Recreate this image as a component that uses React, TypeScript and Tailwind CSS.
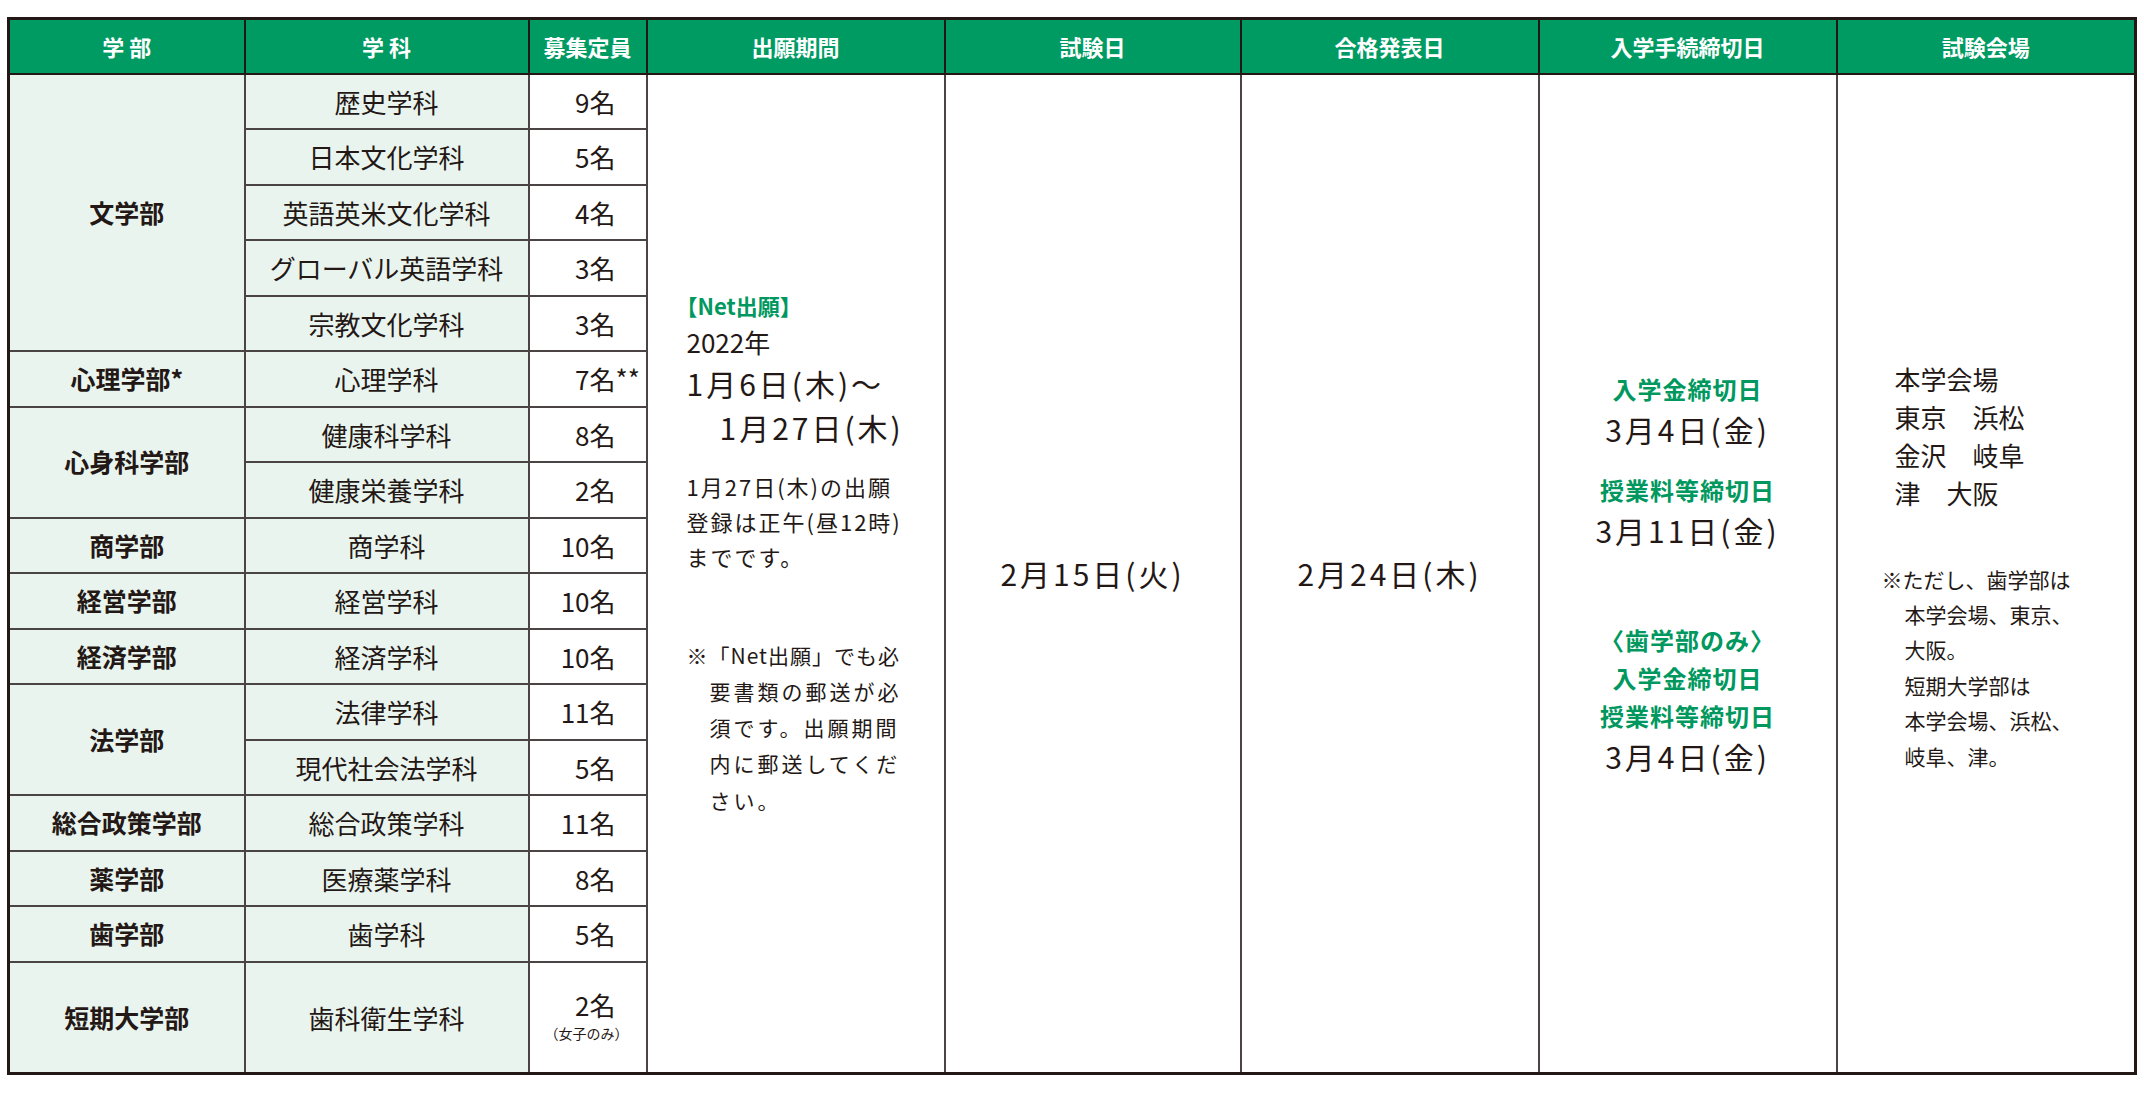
import React from "react";

type Row = {
  faculty?: string;
  span?: number;
  dept: string;
  cap: string;
  capStar?: boolean;
  note?: string;
  tall?: boolean;
};

const rows: Row[] = [
  { faculty: "文学部", span: 5, dept: "歴史学科", cap: "9名" },
  { dept: "日本文化学科", cap: "5名" },
  { dept: "英語英米文化学科", cap: "4名" },
  { dept: "グローバル英語学科", cap: "3名" },
  { dept: "宗教文化学科", cap: "3名" },
  { faculty: "心理学部*", span: 1, dept: "心理学科", cap: "7名", capStar: true },
  { faculty: "心身科学部", span: 2, dept: "健康科学科", cap: "8名" },
  { dept: "健康栄養学科", cap: "2名" },
  { faculty: "商学部", span: 1, dept: "商学科", cap: "10名" },
  { faculty: "経営学部", span: 1, dept: "経営学科", cap: "10名" },
  { faculty: "経済学部", span: 1, dept: "経済学科", cap: "10名" },
  { faculty: "法学部", span: 2, dept: "法律学科", cap: "11名" },
  { dept: "現代社会法学科", cap: "5名" },
  { faculty: "総合政策学部", span: 1, dept: "総合政策学科", cap: "11名" },
  { faculty: "薬学部", span: 1, dept: "医療薬学科", cap: "8名" },
  { faculty: "歯学部", span: 1, dept: "歯学科", cap: "5名" },
  { faculty: "短期大学部", span: 1, dept: "歯科衛生学科", cap: "2名", note: "（女子のみ）", tall: true },
];

const headers = ["学 部", "学 科", "募集定員", "出願期間", "試験日", "合格発表日", "入学手続締切日", "試験会場"];
const widths = [236, 284, 118, 298, 296, 298, 298, 299];

const cell = "border-2 border-[#4a4544]";

function ApplyPeriod() {
  return (
    <td rowSpan={17} className={`${cell} align-top bg-white pt-[212px] pl-[39px]`}>
      <div className="text-[22px] leading-[36px] font-bold text-[#00985e] ml-[-11px]">【Net出願】</div>
      <div className="text-[26px] leading-[38px]">2022年</div>
      <div className="text-[30px] leading-[44px] tracking-[3px] whitespace-nowrap">1月6日(木)〜</div>
      <div className="text-[30px] leading-[44px] tracking-[3px] whitespace-nowrap pl-[33px]">1月27日(木)</div>
      <div className="mt-[20px] text-[22px] leading-[35px] tracking-[2px] whitespace-nowrap">
        <div>1月27日(木)の出願</div>
        <div>登録は正午(昼12時)</div>
        <div>までです。</div>
      </div>
      <div className="mt-[63px] text-[21px] leading-[36.3px] tracking-[3px] whitespace-nowrap">
        <div className="tracking-[1px]">※「Net出願」でも必</div>
        <div className="pl-[23px]">要書類の郵送が必</div>
        <div className="pl-[23px]">須です。出願期間</div>
        <div className="pl-[23px]">内に郵送してくだ</div>
        <div className="pl-[23px]">さい。</div>
      </div>
    </td>
  );
}

function Deadlines() {
  const label = "text-[24px] leading-[38px] font-bold text-[#00985e] tracking-[1px]";
  const date = "text-[30px] leading-[42px] tracking-[3px]";
  return (
    <td rowSpan={17} className={`${cell} align-middle bg-white text-center`}>
      <div className="flex flex-col items-center">
        <div className={label}>入学金締切日</div>
        <div className={date}>3月4日(金)</div>
        <div className={`${label} mt-[21px]`}>授業料等締切日</div>
        <div className={date}>3月11日(金)</div>
        <div className={`${label} mt-[70px]`}>〈歯学部のみ〉</div>
        <div className={label}>入学金締切日</div>
        <div className={label}>授業料等締切日</div>
        <div className={date}>3月4日(金)</div>
      </div>
    </td>
  );
}

function Venues() {
  return (
    <td rowSpan={17} className={`${cell} align-top bg-white pt-[285px]`}>
      <div className="pl-[57px] text-[26px] leading-[38px] whitespace-nowrap">
        <div>本学会場</div>
        <div>東京　浜松</div>
        <div>金沢　岐阜</div>
        <div>津　大阪</div>
      </div>
      <div className="mt-[50px] pl-[44px] text-[21px] leading-[35.4px] whitespace-nowrap">
        <div>※ただし、歯学部は</div>
        <div className="pl-[23px]">本学会場、東京、</div>
        <div className="pl-[23px]">大阪。</div>
        <div className="pl-[23px]">短期大学部は</div>
        <div className="pl-[23px]">本学会場、浜松、</div>
        <div className="pl-[23px]">岐阜、津。</div>
      </div>
    </td>
  );
}

export default function App() {
  return (
    <div className="min-h-screen bg-white pt-[17px] pl-[7px] font-['Noto_Sans_CJK_JP','Noto_Sans',sans-serif] text-[#231815]">
      <table className="table-fixed border-collapse border-[3px] border-[#231815] w-[2129px]">
        <colgroup>
          {widths.map((w, i) => (
            <col key={i} style={{ width: w }} />
          ))}
        </colgroup>
        <thead>
          <tr className="h-[55px]">
            {headers.map((h) => (
              <th
                key={h}
                className="border-2 border-[#231815] bg-[#009b63] text-white text-[22px] font-bold text-center align-middle whitespace-pre"
              >
                {h}
              </th>
            ))}
          </tr>
        </thead>
        <tbody>
          {rows.map((r, i) => (
            <tr key={i} className={r.tall ? "h-[112px]" : "h-[55.5px]"}>
              {r.faculty && (
                <td rowSpan={r.span} className={`${cell} bg-[#eaf4ee] text-center align-middle text-[25px] font-bold`}>
                  {r.faculty}
                </td>
              )}
              <td className={`${cell} bg-[#eaf4ee] text-center align-middle text-[26px]`}>{r.dept}</td>
              <td className={`${cell} bg-white align-middle text-[26px]`}>
                {r.note ? (
                  <div className="flex flex-col">
                    <div className="text-right pr-[30px] leading-[32px]">{r.cap}</div>
                    <div className="text-center text-[14px] leading-[24px] pr-[2px]">{r.note}</div>
                  </div>
                ) : (
                  <div className="text-right pr-[30px]">
                    <span className="relative">
                      {r.cap}
                      {r.capStar && (
                        <span className="absolute left-full top-[5px] text-[26px] leading-none">**</span>
                      )}
                    </span>
                  </div>
                )}
              </td>
              {i === 0 && (
                <>
                  <ApplyPeriod />
                  <td rowSpan={17} className={`${cell} bg-white text-center align-middle text-[30px] tracking-[3px]`}>
                    2月15日(火)
                  </td>
                  <td rowSpan={17} className={`${cell} bg-white text-center align-middle text-[30px] tracking-[3px]`}>
                    2月24日(木)
                  </td>
                  <Deadlines />
                  <Venues />
                </>
              )}
            </tr>
          ))}
        </tbody>
      </table>
    </div>
  );
}
